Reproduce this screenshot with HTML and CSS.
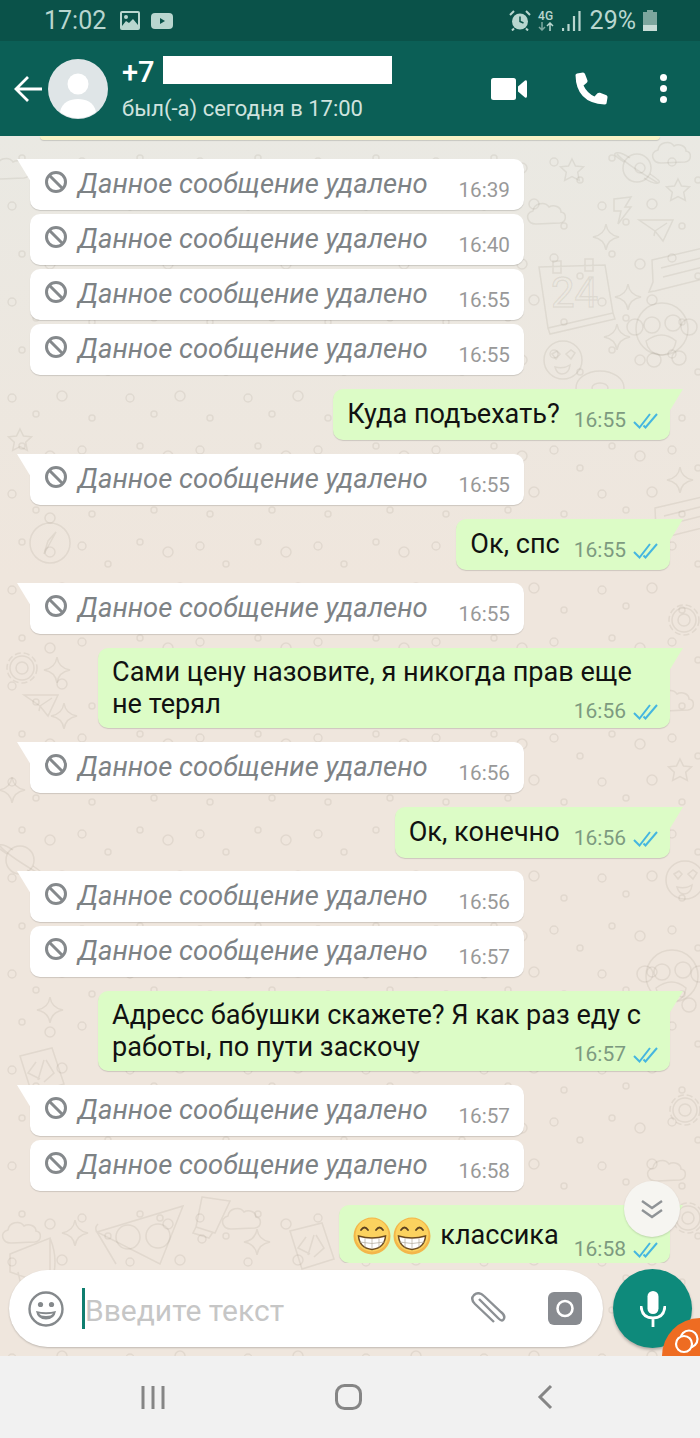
FILE: index.html
```html
<!DOCTYPE html>
<html lang="ru">
<head>
  <meta charset="UTF-8" />
  <title>WhatsApp</title>
  <link rel="stylesheet" href="styles.css">
</head>
<body>
<svg class="defs" width="0" height="0">
  <defs>
    <symbol id="ban" viewBox="0 0 22 22"><circle cx="11" cy="11" r="9.500" fill="none" stroke="#85898c" stroke-width="3"/><path d="M4.500 4.500l13 13" stroke="#85898c" stroke-width="3"/></symbol>
    <symbol id="ticks" viewBox="0 0 25 17"><path d="M1 10l5.500 5.500L17 2M10.500 13.500l2 2L24 2" fill="none" stroke="#45b6e0" stroke-width="2"/></symbol>
    <symbol id="grin" viewBox="0 0 38 38">
      <circle cx="19" cy="19" r="18.500" fill="#f3b64a"/><circle cx="19" cy="18" r="16.500" fill="#fbd25f"/>
      <path d="M8 13q3.500-5 7 0M23 13q3.500-5 7 0" fill="none" stroke="#5a4020" stroke-width="1.800" stroke-linecap="round"/>
      <path d="M5.500 19q13.500 4 27 0q-1 12-13.500 13.500q-12.500-1.500-13.500-13.500z" fill="#fff" stroke="#6b4a1f" stroke-width="1.500"/>
      <path d="M6.500 25q12.500 3 25 0M12 21.500v9M19 22v10M26 21.500v9" fill="none" stroke="#b9b2a6" stroke-width=".8"/>
    </symbol>
    <symbol id="d-cloud" overflow="visible"><path d="M-14 11c-9 0-12-11-3-13c1-8 12-10 16-4c5-3 12 0 12 5c6 1 6 10-1 11z"/></symbol>
    <symbol id="d-star5" overflow="visible"><path d="M0-11l3.500 7l8 .8l-5.800 5.500l1.600 8l-7.300-3.800l-7.300 3.800l1.600-8l-5.800-5.500l8-.8z"/></symbol>
    <symbol id="d-star4" overflow="visible"><path d="M0-13q1.500 11 13 13q-11.500 2-13 13q-1.500-11-13-13q11.500-2 13-13z"/></symbol>
    <symbol id="d-planet" overflow="visible"><circle r="14"/><path d="M-13-6c-9-6-11-8-8-9s8 1 14 5M13 6c9 6 11 8 8 9s-8-1-14-5M-20-14c8 10 30 22 41 29"/></symbol>
    <symbol id="d-bolt" overflow="visible"><path d="M-9-11L8-13L2-3L8-3L-5 14L-2 1L-9 1z"/></symbol>
    <symbol id="d-plane" overflow="visible"><path d="M-18-10L16-10L6 11L-2 1zM-2 1L10-7M-2 1L-3 6"/></symbol>
    <symbol id="d-cal" overflow="visible"><path d="M-38-26L28-28L36 20L-29 35zM-24-32h8v12h-8zM8-34h8v12h-8zM-29 35l2 6L38 26l-2-6"/><text x="-26" y="14" class="doodle-text">24</text></symbol>
    <symbol id="d-chat" overflow="visible"><path d="M-25-12L26-24L30 6L-22 19L-28 20L-24 10zM-16-4L24-14M-14 5L26-5"/></symbol>
    <symbol id="d-monkey" overflow="visible"><circle r="26" cy="-4"/><circle cx="-27" cy="-6" r="8"/><circle cx="27" cy="-6" r="8"/><circle cx="-10" cy="-8" r="8"/><circle cx="11" cy="-10" r="8"/><path d="M-16 8q16-12 30 0q-2 14-16 14q-12-2-14-14z"/><circle cx="-8" cy="27" r="7"/><circle cx="17" cy="25" r="7"/></symbol>
    <symbol id="d-face" overflow="visible"><circle r="19"/><path d="M-11-6l5-3l3 3l-4 5zM3-6l5-4l4 3l-4 6zM-8 7q9 2 15-2q-1 9-8 9q-5 0-7-7z"/></symbol>
    <symbol id="d-compass" overflow="visible"><circle r="20"/><circle cy="-25" r="5"/><path d="M6-11L-6 11L-2-2z"/></symbol>
    <symbol id="d-gear" overflow="visible"><circle r="15" stroke-dasharray="6 3"/><circle r="6"/><circle r="12"/></symbol>
    <symbol id="d-pizza" overflow="visible"><path d="M-43-8L43-34L20 24zM-43-8q-3-4 1-8M-43-8L-24 24"/><circle cx="-12" cy="-3" r="12"/><circle cx="18" cy="-4" r="12"/><circle cx="20" cy="-22" r="3"/></symbol>
    <symbol id="d-tube" overflow="visible"><path d="M-8-28L20-24L5 8L-14 2zM-14 2l-3 6l16 5l4-6"/><circle cx="-8" cy="14" r="4"/></symbol>
    <symbol id="d-code" overflow="visible"><path d="M-20-14L12-22L24 14L-8 24zM-4-8L-12 3L0 9M6-10L14 3L4 12M4-10L-2 10"/></symbol>
    <symbol id="d-horn" overflow="visible"><path d="M-30-8L10-24L10 24L-30 10zM10-24q10 24 0 48M-22 10l3 13h9l-3-9"/></symbol>
    <symbol id="d-donut" overflow="visible"><ellipse rx="24" ry="17"/><ellipse rx="8" ry="5"/></symbol>
    <pattern id="dots" class="dots" width="118" height="96" patternUnits="userSpaceOnUse">
      <circle cx="12" cy="14" r="4"/><circle cx="36" cy="30" r="3"/><circle cx="62" cy="12" r="5"/><circle cx="92" cy="34" r="3"/>
      <circle cx="22" cy="62" r="3"/><circle cx="50" cy="72" r="5"/><circle cx="82" cy="66" r="4"/><circle cx="108" cy="84" r="3"/>
    </pattern>
  </defs>
</svg>

<div class="phone">
  <div class="status-bar">
    <span class="clock">17:02</span>
    <svg class="st-ico" width="21" height="19" viewBox="0 0 21 19"><rect width="20" height="19" rx="2" fill="#b9d6cf"/><rect x="2" y="2" width="16" height="15" fill="#0a5249"/><circle cx="6" cy="6" r="2" fill="#b9d6cf"/><path d="M2 15l4-5l3 2l4-4l5 6v3H2z" fill="#b9d6cf"/></svg>
    <svg class="st-ico" width="22" height="16" viewBox="0 0 22 16"><rect width="22" height="16" rx="4" fill="#b9d6cf"/><path d="M9 5l5 3l-5 3z" fill="#0a5249"/></svg>
    <div class="st-right">
      <svg width="22" height="21" viewBox="0 0 22 21"><circle cx="11" cy="11.500" r="8" fill="#b9d6cf"/><path d="M11 6.500v5l3.500 1.500" fill="none" stroke="#0a5249" stroke-width="1.500"/><path d="M1 5l4-4M21 5l-4-4M5 18.500l-2 2M17 18.500l2 2" stroke="#b9d6cf" stroke-width="2"/></svg>
      <div class="net"><span>4G</span><svg width="16" height="9" viewBox="0 0 16 9"><path d="M4 0v8M1 5l3 3l3-3" fill="none" stroke="#7fa9a1" stroke-width="1.500"/><path d="M12 9V1M9 4l3-3l3 3" fill="none" stroke="#b9d6cf" stroke-width="1.500"/></svg></div>
      <svg class="signal" width="19" height="20" viewBox="0 0 19 20"><path d="M1 20v-3M6.500 20v-7M12 20V5M17.500 20V0" stroke="#b9d6cf" stroke-width="2.200"/></svg>
      <span class="pct">29%</span>
      <svg width="14" height="21" viewBox="0 0 14 21"><path d="M4 0h6v2h4v19H0V2h4z" fill="#7da69e"/><rect y="15" width="14" height="6" fill="#c8dcd7"/></svg>
    </div>
  </div>

  <header class="toolbar">
    <svg class="back" width="29" height="28" viewBox="0 0 29 28"><path d="M28 14H3M14 2L2 14l12 12" fill="none" stroke="#fff" stroke-width="2.800"/></svg>
    <svg class="avatar" width="60" height="60" viewBox="0 0 60 60"><circle cx="30" cy="30" r="30" fill="#dfe5e7"/><circle cx="30" cy="25" r="10.500" fill="#fff"/><path d="M12 53c2-10 10-13 18-13s16 3 18 13a30 30 0 0 1-36 0z" fill="#fff"/></svg>
    <div class="contact">
      <div class="contact-name"><b>+7</b><span class="redact"></span></div>
      <div class="contact-seen">был(-а) сегодня в 17:00</div>
    </div>
    <svg class="tb-video" width="36" height="24" viewBox="0 0 36 24"><rect y="1" width="25" height="22" rx="2.500" fill="#fff"/><path d="M27 9.500L34 3.500Q36 2.500 36 5V19Q36 21.500 34 20.500L27 14.500z" fill="#fff"/></svg>
    <svg class="tb-phone" width="33" height="33" viewBox="0 0 33 33"><path d="M2 1.500L8 .5Q9.500 .5 10 2L12.500 8.500Q12.800 10 11.500 11L8.500 13.500Q12 21 19.500 24.500L22.500 21.300Q23.500 20.300 25 20.800L31.500 23.300Q32.800 24 32.500 25.500L31.500 31.500Q31 32.500 29.500 32.500Q1 31 .5 3Q.5 2 2 1.500z" fill="#fff"/></svg>
    <div class="kebab"><i></i><i></i><i></i></div>
  </header>

  <main class="chat">
    <svg class="wallpaper" viewBox="0 136 700 1220" width="700" height="1220">
      <rect x="0" y="136" width="700" height="1220" fill="url(#dots)" stroke="none"/>
      <use href="#d-planet" x="637" y="168"/><use href="#d-star5" x="572" y="170"/><use href="#d-cloud" x="550" y="213"/>
      <use href="#d-bolt" x="623" y="210"/><use href="#d-plane" x="657" y="230"/><use href="#d-star4" x="606" y="237"/>
      <use href="#d-cal" x="577" y="293"/><use href="#d-chat" x="677" y="272"/><use href="#d-star4" x="628" y="297"/>
      <use href="#d-star4" x="617" y="337"/><use href="#d-monkey" x="662" y="333"/><use href="#d-face" x="563" y="360"/>
      <use href="#d-star5" x="678" y="190"/><use href="#d-cloud" x="675" y="152"/><use href="#d-donut" x="600" y="388"/>
      <use href="#d-cloud" x="14" y="168"/><use href="#d-chat" x="680" y="520"/><use href="#d-star4" x="680" y="480"/>
      <use href="#d-compass" x="50" y="543"/><use href="#d-gear" x="22" y="668"/><use href="#d-star4" x="57" y="670"/>
      <use href="#d-star4" x="64" y="716"/><use href="#d-plane" x="42" y="705"/><use href="#d-star4" x="12" y="790"/>
      <use href="#d-gear" x="684" y="620"/><use href="#d-cloud" x="678" y="700"/><use href="#d-star5" x="680" y="770"/>
      <use href="#d-star5" x="20" y="440"/><use href="#d-planet" x="20" y="860"/><use href="#d-face" x="685" y="880"/>
      <use href="#d-monkey" x="672" y="980"/><use href="#d-star4" x="50" y="1010"/><use href="#d-code" x="40" y="1070"/>
      <use href="#d-gear" x="685" y="1110"/><use href="#d-cloud" x="670" y="1170"/><use href="#d-star4" x="620" y="1240"/>
      <use href="#d-cloud" x="25" y="1232"/><use href="#d-star4" x="75" y="1233"/><use href="#d-pizza" x="140" y="1240"/>
      <use href="#d-tube" x="210" y="1225"/><use href="#d-cloud" x="245" y="1218"/><use href="#d-star4" x="257" y="1242"/>
      <use href="#d-code" x="310" y="1245"/><use href="#d-horn" x="40" y="1262"/><use href="#d-gear" x="688" y="1218"/>
    </svg>

    <div class="messages">
      <div class="notice"></div>

      <div class="msg deleted tail first-top">
        <svg class="ban"><use href="#ban"/></svg><em>Данное сообщение удалено</em><time>16:39</time>
      </div>
      <div class="msg deleted"><svg class="ban"><use href="#ban"/></svg><em>Данное сообщение удалено</em><time>16:40</time></div>
      <div class="msg deleted"><svg class="ban"><use href="#ban"/></svg><em>Данное сообщение удалено</em><time>16:55</time></div>
      <div class="msg deleted"><svg class="ban"><use href="#ban"/></svg><em>Данное сообщение удалено</em><time>16:55</time></div>

      <div class="msg sent new-group">
        <span class="txt">Куда подъехать?</span><div class="meta"><time>16:55</time><svg class="ticks"><use href="#ticks"/></svg></div>
      </div>

      <div class="msg deleted tail new-group"><svg class="ban"><use href="#ban"/></svg><em>Данное сообщение удалено</em><time>16:55</time></div>

      <div class="msg sent new-group">
        <span class="txt">Ок, спс</span><div class="meta"><time>16:55</time><svg class="ticks"><use href="#ticks"/></svg></div>
      </div>

      <div class="msg deleted tail tight"><svg class="ban"><use href="#ban"/></svg><em>Данное сообщение удалено</em><time>16:55</time></div>

      <div class="msg sent wide new-group">
        <span class="txt">Сами цену назовите, я никогда прав еще</span>
        <div class="last-line"><span class="txt">не терял</span><div class="meta"><time>16:56</time><svg class="ticks"><use href="#ticks"/></svg></div></div>
      </div>

      <div class="msg deleted tail new-group"><svg class="ban"><use href="#ban"/></svg><em>Данное сообщение удалено</em><time>16:56</time></div>

      <div class="msg sent new-group">
        <span class="txt">Ок, конечно</span><div class="meta"><time>16:56</time><svg class="ticks"><use href="#ticks"/></svg></div>
      </div>

      <div class="msg deleted tail tight"><svg class="ban"><use href="#ban"/></svg><em>Данное сообщение удалено</em><time>16:56</time></div>
      <div class="msg deleted"><svg class="ban"><use href="#ban"/></svg><em>Данное сообщение удалено</em><time>16:57</time></div>

      <div class="msg sent wide new-group">
        <span class="txt">Адресс бабушки скажете? Я как раз еду с</span>
        <div class="last-line"><span class="txt">работы, по пути заскочу</span><div class="meta"><time>16:57</time><svg class="ticks"><use href="#ticks"/></svg></div></div>
      </div>

      <div class="msg deleted tail new-group"><svg class="ban"><use href="#ban"/></svg><em>Данное сообщение удалено</em><time>16:57</time></div>
      <div class="msg deleted"><svg class="ban"><use href="#ban"/></svg><em>Данное сообщение удалено</em><time>16:58</time></div>

      <div class="msg sent last new-group">
        <svg class="emoji"><use href="#grin"/></svg><svg class="emoji"><use href="#grin"/></svg><span class="txt">классика</span><div class="meta"><time>16:58</time><svg class="ticks"><use href="#ticks"/></svg></div>
      </div>
    </div>

    <div class="scroll-down">
      <svg width="22" height="20" viewBox="0 0 22 20"><path d="M1 2l10 7l10-7M1 11l10 7l10-7" fill="none" stroke="#8f9396" stroke-width="2.400"/></svg>
    </div>

    <div class="compose">
      <div class="input">
        <svg class="smile" width="36" height="36" viewBox="0 0 36 36"><circle cx="18" cy="18" r="16.500" fill="none" stroke="#85898c" stroke-width="2.400"/><circle cx="12.500" cy="13.500" r="2.600" fill="#85898c"/><circle cx="23.500" cy="13.500" r="2.600" fill="#85898c"/><path d="M8 20q10 2.500 20 0q-1.500 8.500-10 8.500t-10-8.500z" fill="#85898c"/><path d="M11 22.500q7 1.500 14 0q-1.500 2.500-7 2.500t-7-2.500z" fill="#fff"/></svg>
        <span class="caret"></span>
        <span class="placeholder">Введите текст</span>
        <svg class="clip" width="37" height="34" viewBox="0 0 37 34"><path d="M9 7L28 26Q32 30 33.500 27.500Q36 24 31 20L14 4Q9 -1 4 3Q0 7 5 12L24 30" fill="none" stroke="#8c9094" stroke-width="2.400"/></svg>
        <svg class="camera" width="34" height="33" viewBox="0 0 34 33"><rect width="34" height="33" rx="6" fill="#888b90"/><circle cx="17" cy="16.500" r="7.500" fill="none" stroke="#fff" stroke-width="2.600"/></svg>
      </div>
      <button class="mic">
        <svg width="26" height="36" viewBox="0 0 26 36"><rect x="7.500" y="0" width="11" height="23" rx="5.500" fill="#fff"/><path d="M1 15q1 12 12 12t12-12M13 27v9" fill="none" stroke="#fff" stroke-width="2.800"/></svg>
      </button>
    </div>

    <div class="badge">
      <svg width="26" height="26" viewBox="0 0 26 26"><circle cx="15" cy="10" r="8.500" fill="none" stroke="#fff" stroke-width="2.200"/><circle cx="10" cy="15" r="8" fill="#ee6c22" stroke="#fff" stroke-width="2.200"/></svg>
    </div>
  </main>

  <nav class="nav-bar">
    <svg width="26" height="25" viewBox="0 0 26 25"><path d="M3 1v23M13 1v23M23 1v23" stroke="#858585" stroke-width="3"/></svg>
    <svg class="nav-home" width="27" height="26" viewBox="0 0 27 26"><rect x="1.500" y="1.500" width="24" height="23" rx="8" fill="none" stroke="#858585" stroke-width="3"/></svg>
    <svg class="nav-back" width="16" height="26" viewBox="0 0 16 26"><path d="M14 2L3 13l11 11" fill="none" stroke="#858585" stroke-width="3"/></svg>
  </nav>
</div>
</body>
</html>
```

FILE: styles.css
```css
* {
  margin: 0;
  padding: 0;
  box-sizing: border-box;
}

html, body {
  height: 100%;
  font-family: Roboto, "Liberation Sans", sans-serif;
}

.defs {
  position: absolute;
}

.phone {
  width: 700px;
  height: 1438px;
  display: flex;
  flex-direction: column;
  overflow: hidden;
}

/* status bar */
.status-bar {
  height: 41px;
  background: #0a5249;
  color: #b9d6cf;
  display: flex;
  align-items: center;
  padding: 0 43px 0 44px;
}

.clock {
  font-size: 25px;
  margin-right: 14px;
}

.st-ico {
  margin-right: 10px;
}

.st-right {
  margin-left: auto;
  display: flex;
  align-items: center;
  gap: 7px;
}

.net {
  display: flex;
  flex-direction: column;
  align-items: center;
  font-size: 12px;
  font-weight: 500;
  line-height: 12px;
}

.signal {
  margin-left: 1px;
}

.pct {
  font-size: 25px;
  margin-left: 2px;
}

/* toolbar */
.toolbar {
  height: 95px;
  background: #0b5f56;
  color: #fff;
  display: flex;
  align-items: center;
  padding-left: 14px;
  position: relative;
  z-index: 2;
}

.back {
  margin-right: 5px;
  margin-top: 1px;
}

.avatar {
  margin-right: 14px;
  margin-top: 1px;
}

.contact {
  width: 340px;
  display: flex;
  flex-direction: column;
  gap: 11px;
}

.contact-name {
  display: flex;
  align-items: center;
  gap: 8px;
  height: 30px;
  font-size: 29px;
}

.contact-name b {
  font-weight: 500;
  padding-top: 3px;
}

.redact {
  width: 229px;
  height: 28px;
  background: #fff;
}

.contact-seen {
  font-size: 22px;
  line-height: 26px;
  color: #cfe3df;
}

.tb-video {
  margin-left: 29px;
}

.tb-phone {
  margin-left: 48px;
}

.kebab {
  margin-left: 52px;
  display: flex;
  flex-direction: column;
  gap: 4px;
}

.kebab i {
  width: 7px;
  height: 7px;
  border-radius: 50%;
  background: #fff;
}

/* chat */
.chat {
  flex: 1;
  position: relative;
  display: flex;
  flex-direction: column;
  min-height: 0;
  overflow: hidden;
  background: linear-gradient(180deg, #eae9e3 0, #efe6dd 36%, #efe6dd 100%);
}

.wallpaper {
  position: absolute;
  top: 0;
  left: 0;
  fill: none;
  stroke: rgba(90, 80, 60, 0.09);
  stroke-width: 1.5;
}

.dots circle {
  fill: none;
  stroke: rgba(90, 80, 60, 0.09);
  stroke-width: 1.5;
}

.doodle-text {
  font-size: 42px;
  font-family: Roboto, sans-serif;
}

.messages {
  flex: 1;
  min-height: 0;
  position: relative;
  display: flex;
  flex-direction: column;
  overflow: hidden;
}

.notice {
  height: 4px;
  margin: 0 40px;
  background: #f7f2c6;
  border-radius: 0 0 6px 6px;
  box-shadow: 0 1px 1px rgba(0, 0, 0, 0.15);
  flex: none;
}

.msg {
  position: relative;
  flex: none;
  display: flex;
  margin-top: 4px;
  border-radius: 10px;
  box-shadow: 0 1px 1px rgba(0, 0, 0, 0.14);
  font-size: 27.1px;
}

.first-top {
  margin-top: 19px;
}

.new-group {
  margin-top: 14px;
}

.tight {
  margin-top: 13px;
}

.deleted {
  width: 494px;
  height: 51px;
  margin-left: 30px;
  padding: 0 14px 0 15px;
  background: #fff;
  align-items: center;
}

.deleted em {
  margin-left: 11px;
  font-size: 27.4px;
  color: #7d8285;
  padding-bottom: 2px;
}

.ban {
  width: 22px;
  height: 22px;
  flex: none;
  margin-bottom: 5px;
}

.deleted time {
  margin-left: auto;
  align-self: flex-end;
  margin-bottom: 8px;
  font-size: 20.7px;
  color: #999;
}

.tail {
  border-top-left-radius: 0;
}

.tail::before {
  content: "";
  position: absolute;
  left: -13px;
  top: 0;
  width: 14px;
  height: 23px;
  background: #fff;
  clip-path: polygon(0 0, 100% 0, 100% 100%);
}

.sent {
  align-self: flex-end;
  min-height: 51px;
  margin-right: 30px;
  padding: 9px 12px 0 14px;
  background: #dcfcc6;
  border-top-right-radius: 0;
  color: #111;
  gap: 14px;
}

.sent::after {
  content: "";
  position: absolute;
  right: -13px;
  top: 0;
  width: 14px;
  height: 23px;
  background: #dcfcc6;
  clip-path: polygon(0 0, 100% 0, 0 100%);
}

.txt {
  line-height: 32px;
  white-space: nowrap;
}

.meta {
  display: flex;
  align-items: center;
  align-self: flex-end;
  gap: 7px;
  margin-bottom: 8px;
  flex: none;
  font-size: 21px;
  color: #7d9a80;
}

.ticks {
  width: 25px;
  height: 17px;
}

/* two lines, the time sits on the last one */
.wide {
  flex-direction: column;
  width: 572px;
  height: 80px;
  padding-top: 8px;
  gap: 0;
}

.last-line {
  display: flex;
  justify-content: space-between;
}

.last-line .meta {
  margin-bottom: -3px;
}

.last {
  height: 58px;
  gap: 0;
  padding-top: 12px;
}

.emoji {
  width: 38px;
  height: 38px;
  margin-right: 2px;
  flex: none;
}

.last .txt {
  margin: 2px 15px 0 7px;
}

.last .meta {
  margin-bottom: 2px;
}

.scroll-down {
  position: absolute;
  left: 624px;
  top: 1045px;
  width: 56px;
  height: 56px;
  border-radius: 50%;
  background: #f6f5f1;
  box-shadow: 0 1px 2px rgba(0, 0, 0, 0.15);
  display: flex;
  align-items: center;
  justify-content: center;
}

/* compose row */
.compose {
  height: 93px;
  flex: none;
  position: relative;
  display: flex;
  padding: 7px 8px 0 9px;
  gap: 10px;
}

.input {
  width: 594px;
  height: 77px;
  border-radius: 39px;
  background: #fff;
  box-shadow: 0 1px 2px rgba(0, 0, 0, 0.2);
  display: flex;
  align-items: center;
  padding-left: 19px;
}

.caret {
  width: 3px;
  height: 41px;
  margin-left: 18px;
  background: #0f7e6f;
}

.placeholder {
  font-size: 30px;
  color: #c6c6c6;
  margin-top: 4px;
}

.clip {
  margin-left: auto;
}

.camera {
  margin: 0 21px 0 41px;
}

.mic {
  width: 79px;
  height: 79px;
  border: none;
  border-radius: 50%;
  background: #0e8a7b;
  box-shadow: 0 2px 3px rgba(0, 0, 0, 0.25);
  display: flex;
  align-items: center;
  justify-content: center;
  margin-top: -1px;
}

.badge {
  position: absolute;
  right: -38px;
  bottom: -38px;
  width: 76px;
  height: 76px;
  border-radius: 50%;
  background: #ee6c22;
}

.badge svg {
  position: absolute;
  left: 12px;
  top: 11px;
}

/* nav */
.nav-bar {
  height: 82px;
  background: #f1f1f1;
  display: flex;
  align-items: center;
  padding-left: 140px;
}

.nav-home {
  margin-left: 169px;
}

.nav-back {
  margin-left: 175px;
}
```
